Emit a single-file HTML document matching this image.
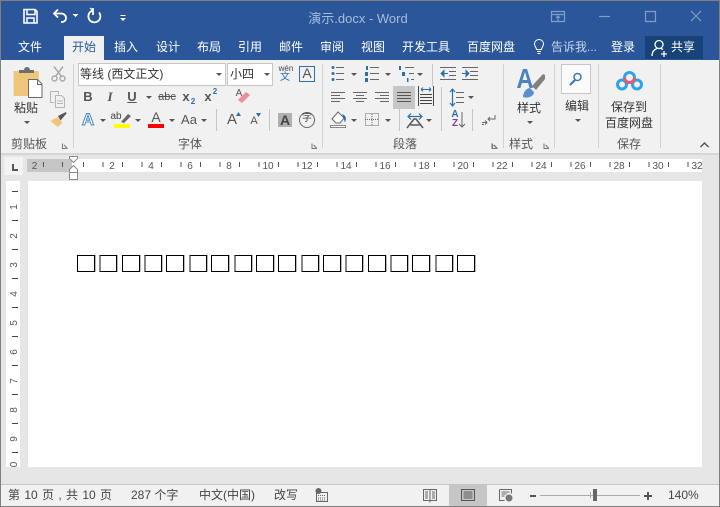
<!DOCTYPE html>
<html lang="zh"><head><meta charset="utf-8"><title>演示.docx - Word</title>
<style>
html,body{margin:0;padding:0}
body{width:720px;height:507px;overflow:hidden;position:relative;background:#e6e6e6;font-family:"Liberation Sans","Noto Sans CJK SC",sans-serif;font-size:12px;color:#444}
div,span,svg{position:absolute}
.t{white-space:nowrap;line-height:16px;height:16px;transform:translateX(-50%)}
.l{white-space:nowrap;line-height:16px;height:16px}
.w{color:#fff}
.c{width:0;height:0;border-left:3px solid transparent;border-right:3px solid transparent;border-top:3px solid #555}
.s{width:1px;background:#c6c6c6}
.g{width:1px;background:#d2d2d2;top:64px;height:84px}
.q{border:1px solid #000;box-sizing:border-box;top:255px;height:17px;width:18px;box-shadow:1px 0 0 #bbb}
.r{border-left:2px solid #888}
</style></head><body>
<div style="left:0;top:0;width:720px;height:60px;background:#2b579a"></div>
<div style="left:0;top:60px;width:720px;height:93px;background:#f1f1f1"></div>
<div style="left:0;top:153px;width:720px;height:2px;background:#d6d6d6"></div>

<!-- QAT -->
<svg style="left:0;top:0" width="135" height="34" fill="none" stroke="#fff" stroke-width="1.6">
<path d="M24 9.500h11l2 2v11.500h-13z"/><path d="M27 9.500v5h8v-5M27 23v-5h7v5" stroke-width="1.500"/>
<path d="M58 9.500l-4 4 4 4" stroke-width="1.800"/><path d="M54 13.500h7c3 0 5 2 5 4.500s-2 4-4 4h-1" stroke-width="1.800"/>
<path d="M72.500 14h6l-3 3z" fill="#fff" stroke="none"/>
<path d="M93 10.500a6 6 0 1 0 6 2" stroke-width="1.800"/><path d="M93 8v7" stroke-width="1.800"/><path d="M90 8l3 2.500" stroke-width="1.200"/>
<path d="M120.500 15.500h5" stroke-width="1"/><path d="M120 18h6l-3 3z" fill="#fff" stroke="none"/>
</svg>
<span class="t" style="left:358px;top:10px;font-size:13px;line-height:18px;height:18px;color:#a6bcdb">演示.docx - Word</span>
<svg style="left:545px;top:5px" width="165" height="24" fill="none" stroke="#7f9ccb" stroke-width="1.200">
<path d="M6.500 6.500h13v10h-13zM6.500 9.500h13M13 16v-5M11 13l2-2 2 2"/>
<path d="M54 11.500h11"/><path d="M100.500 6.500h10v10h-10z"/><path d="M146 6l10 10M156 6l-10 10"/>
</svg>

<!-- Tabs -->
<div style="left:64px;top:36px;width:40px;height:24px;background:#f1f1f1"></div>
<span class="t w" style="left:30px;top:39px">文件</span>
<span class="t" style="left:84px;top:39px;color:#2b579a">开始</span>
<span class="t w" style="left:126px;top:39px">插入</span>
<span class="t w" style="left:168px;top:39px">设计</span>
<span class="t w" style="left:209px;top:39px">布局</span>
<span class="t w" style="left:250px;top:39px">引用</span>
<span class="t w" style="left:291px;top:39px">邮件</span>
<span class="t w" style="left:332px;top:39px">审阅</span>
<span class="t w" style="left:373px;top:39px">视图</span>
<span class="t w" style="left:426px;top:39px">开发工具</span>
<span class="t w" style="left:491px;top:39px">百度网盘</span>
<svg style="left:532px;top:38px" width="14" height="18" fill="none" stroke="#fff" stroke-width="1"><path d="M4.500 11.500c0-2-2-3-2-5.500a4.500 4.500 0 0 1 9 0c0 2.500-2 3.500-2 5.500zM5 13.500h4M5.500 15.500h3"/></svg>
<span class="l" style="left:551px;top:39px;color:#c5d3e8">告诉我...</span>
<span class="t w" style="left:623px;top:39px">登录</span>
<div style="left:645px;top:36px;width:58px;height:23px;background:#174379"></div>
<svg style="left:650px;top:38px" width="20" height="20" fill="none" stroke="#fff" stroke-width="1.300"><path d="M9 2.500a4 4 0 0 1 0 8a4 4 0 0 1 0-8zM2 18c0-4 2-6.500 5-7.500M11 10.500l2 1M14 13v6M11 16h6"/></svg>
<span class="t w" style="left:683px;top:39px">共享</span>

<!-- Separators -->
<div class="g" style="left:73px"></div><div class="g" style="left:322px"></div><div class="g" style="left:503px"></div><div class="g" style="left:554px"></div><div class="g" style="left:598px"></div><div class="g" style="left:660px"></div>
<div class="s" style="left:216px;top:109px;height:22px"></div><div class="s" style="left:269px;top:109px;height:22px"></div>
<div class="s" style="left:432px;top:64px;height:22px"></div><div class="s" style="left:441px;top:87px;height:22px"></div><div class="s" style="left:399px;top:109px;height:22px"></div><div class="s" style="left:441px;top:109px;height:22px"></div><div class="s" style="left:472px;top:109px;height:22px"></div>

<!-- Clipboard -->
<svg style="left:10px;top:64px" width="60" height="66">
<path d="M4 7h27a1 1 0 0 1 1 1v24H5a1 1 0 0 1-1-1z" fill="#eec77d" transform="scale(.9,1)"/>
<path d="M9 9V6h5a3 3 0 0 1 6 0h4v3z" fill="#6e6e6e"/>
<path d="M18.500 15.500h9l4.500 4.500v13.500H18.500z" fill="#fff" stroke="#6a6a6a" stroke-width="1"/><path d="M27.500 15.500v5h4.500" fill="none" stroke="#6a6a6a"/>
<g fill="none" stroke="#aaa" stroke-width="1.500"><circle cx="44.500" cy="14.500" r="2.500"/><circle cx="52.500" cy="14.500" r="2.500"/><path d="M45.500 12.500L53 2.500M51.500 12.500L44 2.500"/></g>
<g fill="none" stroke="#b5b5b5" stroke-width="1"><path d="M40.500 27.500h8v3M40.500 27.500v11h4"/><path d="M45.500 31.500h6l3 3v9h-9z" fill="#f1f1f1"/><path d="M47 37h6M47 39.500h6"/></g>
<path d="M40.500 57l7-4 5 6-5 4z" fill="#eec77d"/><path d="M48 52l8-4 .5 1.500-6 7z" fill="#555"/>
</svg>
<span class="t" style="left:26px;top:100px;color:#333">粘贴</span>
<div class="c" style="left:24px;top:121px"></div>
<span class="t" style="left:29px;top:136px;color:#555">剪贴板</span>
<svg style="left:60px;top:140px" width="450" height="12" fill="none" stroke="#777" stroke-width="1"><path d="M2.500 3.500v5h5M4 5l3 3M252 3.500v5h5M253.500 5l3 3M432 3.500v5h5M433.500 5l3 3"/></svg>
<svg style="left:490px;top:140px" width="60" height="12" fill="none" stroke="#777" stroke-width="1"><path d="M2.500 3.500v5h5M4 5l3 3M54 3.500v5h5M55.500 5l3 3"/></svg>

<!-- Font -->
<div style="left:78px;top:63px;width:146px;height:21px;background:#fff;border:1px solid #c6c6c6"></div>
<span class="l" style="left:80px;top:66px;color:#333">等线 (西文正文)</span>
<div class="c" style="left:216px;top:73px"></div>
<div style="left:227px;top:63px;width:44px;height:21px;background:#fff;border:1px solid #c6c6c6"></div>
<span class="l" style="left:230px;top:66px;color:#333">小四</span>
<div class="c" style="left:264px;top:73px"></div>
<span class="t" style="left:286px;top:63px;font-size:8px;color:#444;line-height:12px">wén</span>
<span class="t" style="left:285px;top:72px;font-size:10px;color:#2b70ad;line-height:12px">文</span>
<div style="left:299px;top:66px;width:14px;height:14px;border:1px solid #2b70ad"></div>
<span class="t" style="left:307px;top:65px;font-size:14px;color:#555">A</span>

<span class="t" style="left:88px;top:89px;font-weight:bold;color:#555;font-size:13px">B</span>
<span class="t" style="left:110px;top:89px;font-style:italic;font-family:'Liberation Serif',serif;font-weight:bold;color:#555;font-size:13px">I</span>
<span class="t" style="left:132px;top:89px;font-weight:bold;text-decoration:underline;color:#555;font-size:13px">U</span>
<div class="c" style="left:146px;top:96px"></div>
<span class="t" style="left:167px;top:89px;font-size:11px;color:#555;text-decoration:line-through">abc</span>
<span class="t" style="left:186px;top:89px;font-weight:bold;color:#555;font-size:13px">x</span><span class="t" style="left:193px;top:94px;font-size:8px;color:#2b70ad;font-weight:bold">2</span>
<span class="t" style="left:208px;top:89px;font-weight:bold;color:#555;font-size:13px">x</span><span class="t" style="left:215px;top:84px;font-size:8px;color:#2b70ad;font-weight:bold">2</span>
<span class="t" style="left:239px;top:86px;font-size:10px;color:#555">A</span>
<svg style="left:236px;top:90px" width="16" height="16"><path d="M2 10l8-8 4 3-8 8z" fill="#f08a9c"/></svg>

<span class="t" style="left:88px;top:111px;font-size:17px;font-weight:bold;color:#fff;-webkit-text-stroke:1px #4a86c6;line-height:18px">A</span>
<div class="c" style="left:100px;top:119px"></div>
<span class="t" style="left:119px;top:110px;font-size:10px;color:#444;line-height:13px;margin-left:-3px">ab</span>
<svg style="left:118px;top:112px" width="14" height="12"><path d="M3 10l7-8 3 2-7 7z" fill="#666"/></svg>
<div style="left:114px;top:124px;width:16px;height:4px;background:#ffff00"></div>
<div class="c" style="left:135px;top:119px"></div>
<span class="t" style="left:156px;top:111px;font-size:14px;color:#555;line-height:13px">A</span>
<div style="left:148px;top:124px;width:16px;height:4px;background:#f00"></div>
<div class="c" style="left:169px;top:119px"></div>
<span class="t" style="left:189px;top:112px;font-size:13px;color:#555">Aa</span>
<div class="c" style="left:201px;top:119px"></div>
<span class="t" style="left:232px;top:112px;font-size:15px;color:#555">A</span>
<svg style="left:236px;top:112px" width="5" height="4"><path d="M0 4h5L2.500 0z" fill="#2b70ad"/></svg>
<span class="t" style="left:254px;top:113px;font-size:11px;color:#555">A</span>
<svg style="left:256px;top:113px" width="5" height="4"><path d="M0 0h5L2.500 4z" fill="#2b70ad"/></svg>
<div style="left:278px;top:113px;width:14px;height:14px;background:#b0b0b0"></div>
<span class="t" style="left:285px;top:112px;font-size:14px;font-weight:bold;color:#444">A</span>
<div style="left:299px;top:112px;width:14px;height:14px;border:1px solid #666;border-radius:50%"></div>
<span class="t" style="left:307px;top:111px;font-size:10px;color:#444">字</span>
<span class="t" style="left:190px;top:136px;color:#555">字体</span>

<!-- Paragraph -->
<div style="left:393px;top:86px;width:22px;height:23px;background:#c6c6c6"></div>
<svg style="left:325px;top:62px" width="175" height="72" fill="none" stroke="#666" stroke-width="1">
<g fill="#2b70ad" stroke="none"><circle cx="8" cy="5.500" r="1.500"/><circle cx="8" cy="11.500" r="1.500"/><circle cx="8" cy="17.500" r="1.500"/><rect x="41" y="4" width="2" height="4"/><rect x="40" y="10" width="3" height="4"/><rect x="40" y="16" width="3" height="4"/><rect x="74" y="4" width="2" height="4"/><rect x="77" y="10" width="3" height="4"/><rect x="82" y="16" width="1.500" height="4"/></g>
<path d="M11 5.500h8M11 11.500h8M11 17.500h8M45 5.500h9M45 11.500h9M45 17.500h9M80 5.500h9M84 11.500h5M86 17.500h3"/>
<path d="M115 5.500h16M124 9.500h7M124 13.500h7M115 17.500h16M137 5.500h16M145 9.500h8M145 13.500h8M137 17.500h16"/>
<path d="M123 11.500h-7M116 11.500l3-3v6zM137 11.500h6M144 11.500l-3-3v6z" stroke="#2b70ad" fill="#2b70ad"/>
<path d="M6 30.500h14M6 33.500h9M6 36.500h14M6 39.500h9M28 30.500h14M31 33.500h8M28 36.500h14M31 39.500h8M50 30.500h14M55 33.500h9M50 36.500h14M55 39.500h9"/>
<path d="M72 30.500h14M72 33.500h14M72 36.500h14M72 39.500h14" stroke="#555"/>
<path d="M95 32.500h12M95 35.500h12M95 38.500h12M95 41.500h12M93.500 24v20M108.500 24v20" stroke="#444"/>
<path d="M96 27.500h10M96 27.500l2-2M96 27.500l2 2M106 27.500l-2-2M106 27.500l-2 2" stroke="#2b70ad"/>
<path d="M131 30.500h8M131 35.500h8M131 40.500h8" />
<path d="M127.500 28v15M125 30l2.500-3 2.500 3M125 41l2.500 3 2.500-3" stroke="#2b70ad" stroke-width="1.200"/>
<path d="M7 57l6-7 6 6-4 5h-4z" fill="#fff" stroke="#666"/><path d="M18 53c2 1 3 3 2 6z" fill="#2b70ad" stroke="#2b70ad"/><rect x="5.500" y="63.500" width="15" height="2" fill="#fff" stroke="#888"/>
<rect x="40.500" y="51.500" width="13" height="12" stroke="#666" stroke-dasharray="1 1"/><path d="M47 52v12M40 57.500h13" stroke-dasharray="1 1"/>
<path d="M86 51.500l-3 3 3 3M94 51.500l3 3-3 3M83 54.500h14" stroke="#2b70ad" stroke-width="1.200"/>
<path d="M82 66L89 57h2L98 66M85.500 63h9" stroke="#555" stroke-width="1.500"/>
<path d="M137 50v15M134 62l3 3 3-3" stroke="#666"/>
<path d="M170 53v4h-7M165 55l-2 2 2 2M157 60.500h5M160 58.500l2 2-2 2M157 62.500h2" stroke="#666"/>
</svg>
<span class="t" style="left:455px;top:109px;font-size:10px;color:#2b70ad;font-weight:bold;line-height:11px">A</span>
<span class="t" style="left:455px;top:118px;font-size:10px;color:#7b3f98;font-weight:bold;line-height:11px">Z</span>
<span class="t" style="left:405px;top:136px;color:#555">段落</span>
<div class="c" style="left:351px;top:73px"></div><div class="c" style="left:385px;top:73px"></div><div class="c" style="left:417px;top:73px"></div>
<div class="c" style="left:468px;top:96px"></div><div class="c" style="left:351px;top:119px"></div><div class="c" style="left:385px;top:119px"></div><div class="c" style="left:426px;top:119px"></div>

<!-- Styles -->
<span class="t" style="left:525px;top:63px;font-size:28px;line-height:32px;height:32px;font-weight:bold;color:#4d82bc;transform:translateX(-50%) scaleX(.85)">A</span>
<svg style="left:517px;top:66px" width="30" height="32"><path d="M15 20L26 8l2 1v4L19 24z" fill="#808080"/><path d="M6 31c0-4 3-9 7-9l4 4c0 4-6 7-11 5z" fill="#5a90cd"/></svg>
<span class="t" style="left:529px;top:100px;color:#333">样式</span>
<div class="c" style="left:527px;top:121px"></div>
<span class="t" style="left:521px;top:136px;color:#555">样式</span>

<!-- Edit -->
<div style="left:561px;top:64px;width:28px;height:28px;background:#fafafa;border:1px solid #c6c6c6"></div>
<svg style="left:568px;top:71px" width="16" height="16" fill="none" stroke="#3b79b8" stroke-width="1.500"><circle cx="9.500" cy="6" r="3.500"/><path d="M7 9l-5 5" stroke-width="2"/></svg>
<span class="t" style="left:577px;top:98px;color:#333">编辑</span>
<div class="c" style="left:575px;top:119px"></div>

<!-- Baidu -->
<svg style="left:614px;top:69px" width="30" height="24" fill="none" stroke-width="3">
<circle cx="8" cy="15.500" r="4.500" stroke="#2ba5e8"/><circle cx="23" cy="15.500" r="4.500" stroke="#2ba5e8"/>
<path d="M10.500 8.500a5 5 0 0 1 10 0" stroke="#2ba5e8"/>
<path d="M10.500 8.500a5 5 0 0 0 10 0" stroke="#f0566c"/>
</svg>
<span class="t" style="left:629px;top:99px;color:#333">保存到</span>
<span class="t" style="left:629px;top:115px;color:#333">百度网盘</span>
<span class="t" style="left:629px;top:136px;color:#555">保存</span>
<svg style="left:698px;top:140px" width="14" height="10" fill="none" stroke="#555" stroke-width="1.500"><path d="M2.500 7l4-4 4 4"/></svg>

<!-- Ruler -->
<div style="left:4px;top:157px;width:19px;height:18px;background:#f3f3f3"></div>
<svg style="left:10px;top:163px" width="10" height="10" fill="none" stroke="#555" stroke-width="2"><path d="M3 1v6h5"/></svg>
<div style="left:27px;top:159px;width:675px;height:13px;background:#fff"></div>
<div style="left:27px;top:159px;width:45px;height:13px;background:#c6c6c6"></div>
<svg style="left:0;top:155px" width="720" height="28" font-family="Liberation Sans" font-size="10" fill="#555" text-anchor="middle">
<path d="M83 9.500H702" stroke="#555" stroke-width="5" stroke-dasharray="1 18.500" fill="none"/>
<path d="M43 9.500h1M62 9.500h1" stroke="#555" stroke-width="5" fill="none"/>
<text x="34.500" y="14">2</text><text x="112" y="14">2</text><text x="151" y="14">4</text><text x="190" y="14">6</text><text x="229" y="14">8</text><text x="268" y="14">10</text><text x="307" y="14">12</text><text x="346" y="14">14</text><text x="385" y="14">16</text><text x="424" y="14">18</text><text x="463" y="14">20</text><text x="502" y="14">22</text><text x="541" y="14">24</text><text x="580" y="14">26</text><text x="619" y="14">28</text><text x="658" y="14">30</text><text x="697" y="14">32</text>
<path d="M69.500 1.500h8v2l-4 4-4-4zM69.500 17.500v-3l4-4 4 4v3zM69.500 17.500h8v7h-8z" fill="#fff" stroke="#8a8a8a"/>
</svg>
<div style="left:6px;top:181px;width:14px;height:286px;background:#fff;overflow:hidden"></div>
<svg style="left:6px;top:181px" width="14" height="286" font-family="Liberation Sans" font-size="10" fill="#555" text-anchor="middle">
<path d="M9 10V286" stroke="#444" stroke-width="6" stroke-dasharray="1 28" fill="none"/>
<text transform="translate(11,26) rotate(-90)">1</text><text transform="translate(11,55) rotate(-90)">2</text><text transform="translate(11,84) rotate(-90)">3</text><text transform="translate(11,113) rotate(-90)">4</text><text transform="translate(11,142) rotate(-90)">5</text><text transform="translate(11,171) rotate(-90)">6</text><text transform="translate(11,200) rotate(-90)">7</text><text transform="translate(11,229) rotate(-90)">8</text><text transform="translate(11,258) rotate(-90)">9</text><text transform="translate(11,283.500) rotate(-90)">0</text>
</svg>

<!-- Page -->
<div style="left:28px;top:181px;width:674px;height:286px;background:#fff"></div>
<div class="q" style="left:77px"></div><div class="q r" style="left:99px"></div><div class="q" style="left:122px"></div><div class="q r" style="left:144px"></div><div class="q" style="left:166px"></div><div class="q r" style="left:189px"></div><div class="q" style="left:211px"></div><div class="q r" style="left:234px"></div><div class="q" style="left:256px"></div><div class="q" style="left:278px"></div><div class="q r" style="left:301px"></div><div class="q" style="left:323px"></div><div class="q r" style="left:345px"></div><div class="q" style="left:368px"></div><div class="q r" style="left:390px"></div><div class="q" style="left:412px"></div><div class="q r" style="left:435px"></div><div class="q" style="left:457px"></div>

<!-- Status bar -->
<div style="left:0;top:484px;width:720px;height:1px;background:#c6c6c6"></div>
<div style="left:0;top:485px;width:720px;height:21px;background:#f1f1f1"></div>
<span class="l" style="left:8px;top:487px;word-spacing:1px">第 10 页 , 共 10 页</span>
<span class="l" style="left:131px;top:487px">287 个字</span>
<span class="l" style="left:199px;top:487px">中文(中国)</span>
<span class="l" style="left:274px;top:487px">改写</span>
<svg style="left:314px;top:487px" width="16" height="16" fill="none" stroke="#666"><circle cx="4.500" cy="4" r="2.500" fill="#666"/><rect x="2.500" y="5.500" width="11" height="9"/><path d="M4 8.500h8M4 11h8M4 13h8" stroke-dasharray="1 1"/></svg>
<div style="left:449px;top:485px;width:38px;height:21px;background:#c6c6c6"></div>
<svg style="left:420px;top:486px" width="100" height="19" fill="none" stroke="#666" stroke-width="1">
<path d="M3.500 3.500h13v11h-13zM10 3.500v13M5 6h3M5 8h3M5 10h3M5 12h3M12 6h3M12 8h3M12 10h3M12 12h3"/>
<path d="M41.500 3.500h13v11h-13zM43.500 6h9M43.500 8h9M43.500 10h9M43.500 12h9" stroke="#555"/>
<path d="M79.500 3.500h12v4M79.500 3.500v11h5M81.500 6h8M81.500 8h5M81.500 10h3"/><circle cx="89" cy="12" r="3.500" fill="#777" stroke="none"/>
</svg>
<div style="left:530px;top:495px;width:6px;height:2px;background:#555"></div>
<div style="left:540px;top:495px;width:100px;height:1px;background:#aaa"></div>
<div style="left:590px;top:492px;width:1px;height:6px;background:#aaa"></div>
<div style="left:593px;top:489px;width:4px;height:12px;background:#666"></div>
<div style="left:644px;top:495px;width:8px;height:2px;background:#555"></div>
<div style="left:647px;top:492px;width:2px;height:8px;background:#555"></div>
<span class="l" style="left:668px;top:487px">140%</span>

<!-- window border -->
<div style="left:0;top:0;width:718px;height:505px;border:1px solid #7f7f7f;pointer-events:none"></div>
</body></html>
